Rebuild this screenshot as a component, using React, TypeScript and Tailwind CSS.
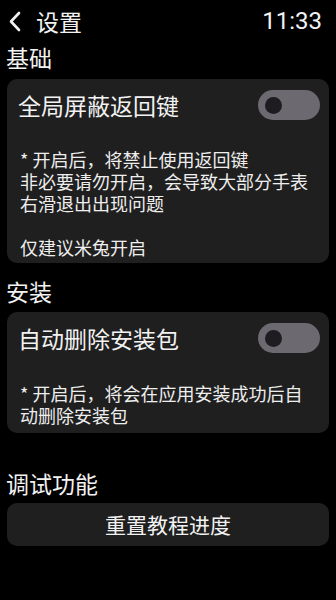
import React from 'react';

const font = { fontFamily: '"Noto Sans CJK SC", "Noto Sans", Roboto, sans-serif' };

function Toggle() {
  return (
    <div className="w-[62px] h-[30px] rounded-full bg-[#6d6970] flex items-center pl-[7px] shrink-0">
      <div className="w-[17px] h-[17px] rounded-full bg-[#1d1c21]" />
    </div>
  );
}

function SectionTitle({ children, className = '' }: { children: React.ReactNode; className?: string }) {
  return <div className={`px-[6px] text-[23px] leading-[30px] text-[#f2f2f2] ${className}`}>{children}</div>;
}

export default function App() {
  return (
    <div className="w-[336px] h-[600px] bg-black text-white overflow-hidden" style={font}>
      {/* header */}
      <div className="h-[42px] flex items-center justify-between pl-[8px] pr-[14px]">
        <div className="flex items-center">
          <svg width="14" height="21" viewBox="0 0 14 21" fill="none" className="mr-[14px]">
            <path d="M11 2 L3 10.5 L11 19" stroke="#f2f2f2" strokeWidth="2.6" strokeLinecap="round" strokeLinejoin="round" />
          </svg>
          <span className="text-[23px] leading-[30px] text-[#f2f2f2]">设置</span>
        </div>
        <span className="text-[24px] leading-[30px] text-[#f2f2f2]" style={{ fontFamily: 'Roboto, "Noto Sans", sans-serif' }}>11:33</span>
      </div>

      <SectionTitle>基础</SectionTitle>
      <div className="mx-[7px] mt-[7px] rounded-[10px] bg-[#1f1f1f] pl-[11px] pr-[9px] pt-[11px] pb-[5px]">
        <div className="flex items-center justify-between">
          <span className="text-[23px] leading-[30px] text-[#f2f2f2]">全局屏蔽返回键</span>
          <Toggle />
        </div>
        <div className="mt-[28px] pl-[2px] text-[18px] leading-[22px] text-[#eeeeee]">
          <div>* 开启后，将禁止使用返回键</div>
          <div>非必要请勿开启，会导致大部分手表</div>
          <div>右滑退出出现问题</div>
          <div>&nbsp;</div>
          <div>仅建议米兔开启</div>
        </div>
      </div>

      <SectionTitle className="mt-[13px]">安装</SectionTitle>
      <div className="mx-[7px] mt-[6px] rounded-[10px] bg-[#1f1f1f] pl-[11px] pr-[9px] pt-[11px] pb-[7px]">
        <div className="flex items-center justify-between">
          <span className="text-[23px] leading-[30px] text-[#f2f2f2]">自动删除安装包</span>
          <Toggle />
        </div>
        <div className="mt-[29px] pl-[2px] text-[18px] leading-[22px] text-[#eeeeee]">
          <div>* 开启后，将会在应用安装成功后自</div>
          <div>动删除安装包</div>
        </div>
      </div>

      <SectionTitle className="mt-[35px]">调试功能</SectionTitle>
      <div className="mx-[7px] mt-[5px] h-[43px] rounded-[10px] bg-[#1f1f1f] flex items-center justify-center text-[21px] text-[#f2f2f2]">
        重置教程进度
      </div>
    </div>
  );
}
